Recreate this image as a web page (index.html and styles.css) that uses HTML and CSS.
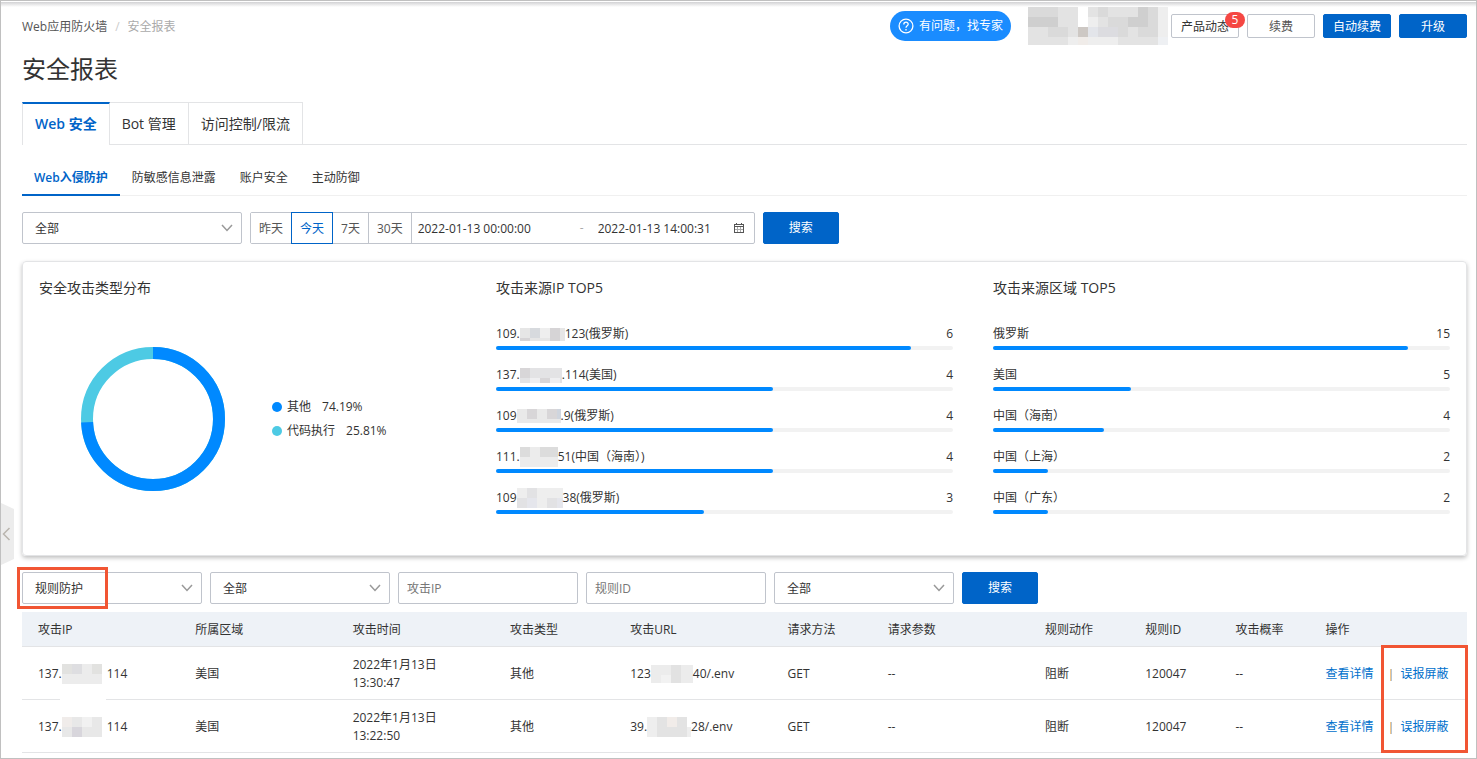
FILE: index.html
```html
<!DOCTYPE html>
<html lang="zh-CN">
<head>
<meta charset="utf-8">
<title>安全报表</title>
<link rel="stylesheet" href="styles.css">
</head>
<body>
<div class="page">
  <button class="collapse" type="button" aria-label="收起">
    <svg width="13" height="62" viewBox="0 0 13 62"><path d="M0 0L13 6V56L0 62Z" fill="#ececec"/><path d="M8.500 25L2.500 31L8.500 37" fill="none" stroke="#b9b5ae" stroke-width="1.500"/></svg>
  </button>

  <header class="topbar">
    <nav class="crumbs"><a href="#">Web应用防火墙</a><span class="slash">/</span><span class="here">安全报表</span></nav>
    <button class="expert" type="button">
      <svg width="16" height="16" viewBox="0 0 16 16" fill="none" stroke="#fff" stroke-width="1.300"><circle cx="8" cy="8" r="6.900"/><path d="M5.800 6.400C5.800 3.300 10.300 3.500 10.200 6.200C10.100 7.800 8 7.800 8 9.800"/><path d="M8 11V12.400"/></svg>
      有问题，找专家
    </button>
    <svg class="mask-account" width="140" height="38" viewBox="0 0 140 38" shape-rendering="crispEdges">
      <rect width="140" height="38" fill="#e3e3e3"/>
      <path d="M0 0H30V10H0ZM20 20H40V30H20ZM70 0H80V10H70ZM80 10H100V20H80ZM90 20H100V30H90ZM120 0H130V30H110V20H120Z" fill="#dadada"/>
      <path d="M0 10H30V20H0ZM110 0H120V20H100V10H110Z" fill="#cfcfcf"/>
      <path d="M50 0H60V20H50Z" fill="#fff"/>
      <path d="M50 20H60V30H50Z" fill="#cdc8c4"/>
      <path d="M60 20H70V30H60Z" fill="#e3e5ea"/>
      <path d="M70 20H90V30H70Z" fill="#dcdce0"/>
      <path d="M40 30H50V38H40ZM60 30H90V38H60ZM130 0H140V10H130ZM60 10H70V20H60ZM130 10H140V30H130Z" fill="#eee"/>
      <path d="M50 30H60V38H50Z" fill="#f0ece9"/>
      <path d="M130 30H140V38H130Z" fill="#eef0f3"/>
    </svg>
    <div class="actions">
      <button class="btn small news" type="button">产品动态<span class="badge">5</span></button>
      <button class="btn small muted" type="button">续费</button>
      <button class="btn small primary" type="button">自动续费</button>
      <button class="btn small primary" type="button">升级</button>
    </div>
  </header>

  <h1>安全报表</h1>

  <nav class="tabs">
    <a class="tab active" href="#">Web 安全</a>
    <a class="tab" href="#">Bot 管理</a>
    <a class="tab" href="#">访问控制/限流</a>
  </nav>

  <nav class="subtabs">
    <a class="subtab active" href="#">Web入侵防护</a>
    <a class="subtab" href="#">防敏感信息泄露</a>
    <a class="subtab" href="#">账户安全</a>
    <a class="subtab" href="#">主动防御</a>
  </nav>

  <form class="filters">
    <div class="select wide">
      <select aria-label="域名"><option>全部</option></select>
      <svg width="12" height="8" viewBox="0 0 12 8"><path d="M1 1L6 6.500L11 1"/></svg>
    </div>
    <div class="range">
      <button type="button">昨天</button>
      <button type="button" class="on">今天</button>
      <button type="button">7天</button>
      <button type="button">30天</button>
      <div class="dates">
        <input type="text" aria-label="开始时间" value="2022-01-13 00:00:00">
        <span>-</span>
        <input type="text" aria-label="结束时间" value="2022-01-13 14:00:31">
        <svg width="10" height="10" viewBox="0 0 10 10" fill="none" stroke="#555" shape-rendering="crispEdges"><path d="M.500 1.500H9.500V9.500H.500ZM0 3.500H10M2.500 0V2M7.500 0V2"/><path d="M3.500 4V9M6.500 4V9M1 6.500H9" stroke="#aaa"/></svg>
      </div>
    </div>
    <button class="btn primary" type="button">搜索</button>
  </form>

  <section class="card">
    <div class="panel">
      <h2>安全攻击类型分布</h2>
      <div class="chart">
        <svg width="144" height="144" viewBox="0 0 144 144" fill="none" stroke-width="12">
          <circle cx="72" cy="72" r="66" stroke="#4dcae4"/>
          <circle cx="72" cy="72" r="66" stroke="#0089ff" pathLength="100" stroke-dasharray="74.19 25.81" transform="rotate(-90 72 72)"/>
        </svg>
        <ul class="legend">
          <li><i class="dot blue"></i><span>其他</span><span class="pct">74.19%</span></li>
          <li><i class="dot cyan"></i><span>代码执行</span><span class="pct">25.81%</span></li>
        </ul>
      </div>
    </div>
    <div class="panel">
      <h2>攻击来源IP TOP5</h2>
      <ol class="ranks">
        <li><div class="line"><span>109.</span><svg width="45" height="13" shape-rendering="crispEdges"><rect width="45" height="13" fill="#e6e6e6"/><path d="M10 0H20V10H10Z" fill="#d7dade"/><path d="M30 0H40V13H30ZM0 10H10V13H0Z" fill="#d6d4d6"/><path d="M20 0H30V10H20Z" fill="#eee"/></svg><span>123(俄罗斯)</span><b>6</b></div><div class="track"><div class="fill" style="width:90.91%"></div></div></li>
        <li><div class="line"><span>137.</span><svg width="42" height="15" shape-rendering="crispEdges"><rect width="42" height="15" fill="#e3e3e5"/><path d="M0 0H10V10H0ZM20 10H30V15H20Z" fill="#d8d6d8"/><path d="M10 10H20V15H10ZM30 10H40V15H30Z" fill="#efeff1"/></svg><span>.114(美国)</span><b>4</b></div><div class="track"><div class="fill" style="width:60.61%"></div></div></li>
        <li><div class="line"><span>109</span><svg width="44" height="14" shape-rendering="crispEdges"><rect width="44" height="14" fill="#e9e9e9"/><path d="M10 0H20V10H10ZM30 0H40V10H30Z" fill="#d8d6d8"/><path d="M40 0H44V10H40Z" fill="#cfd5de"/></svg><span>.9(俄罗斯)</span><b>4</b></div><div class="track"><div class="fill" style="width:60.61%"></div></div></li>
        <li><div class="line"><span>111.</span><svg width="38" height="20" shape-rendering="crispEdges"><rect width="38" height="20" fill="#ececec"/><path d="M0 0H10V10H0ZM20 0H38V10H20Z" fill="#dcdcdc"/></svg><span>51(中国（海南）)</span><b>4</b></div><div class="track"><div class="fill" style="width:60.61%"></div></div></li>
        <li><div class="line"><span>109</span><svg width="46" height="20" shape-rendering="crispEdges"><rect width="46" height="20" fill="#eee"/><path d="M10 0H20V10H10ZM30 10H40V20H30ZM0 10H10V20H0Z" fill="#e2e2e4"/><path d="M10 10H20V20H10ZM40 10H46V20H40Z" fill="#e5e6ec"/></svg><span>38(俄罗斯)</span><b>3</b></div><div class="track"><div class="fill" style="width:45.45%"></div></div></li>
      </ol>
    </div>
    <div class="panel">
      <h2>攻击来源区域 TOP5</h2>
      <ol class="ranks">
        <li><div class="line"><span>俄罗斯</span><b>15</b></div><div class="track"><div class="fill" style="width:90.91%"></div></div></li>
        <li><div class="line"><span>美国</span><b>5</b></div><div class="track"><div class="fill" style="width:30.3%"></div></div></li>
        <li><div class="line"><span>中国（海南）</span><b>4</b></div><div class="track"><div class="fill" style="width:24.24%"></div></div></li>
        <li><div class="line"><span>中国（上海）</span><b>2</b></div><div class="track"><div class="fill" style="width:12.12%"></div></div></li>
        <li><div class="line"><span>中国（广东）</span><b>2</b></div><div class="track"><div class="fill" style="width:12.12%"></div></div></li>
      </ol>
    </div>
  </section>

  <form class="filters second">
    <div class="select">
      <select aria-label="防护类型"><option>规则防护</option></select>
      <svg width="12" height="8" viewBox="0 0 12 8"><path d="M1 1L6 6.500L11 1"/></svg>
    </div>
    <div class="select">
      <select aria-label="攻击类型"><option>全部</option></select>
      <svg width="12" height="8" viewBox="0 0 12 8"><path d="M1 1L6 6.500L11 1"/></svg>
    </div>
    <input class="text" type="text" aria-label="攻击IP" placeholder="攻击IP">
    <input class="text" type="text" aria-label="规则ID" placeholder="规则ID">
    <div class="select">
      <select aria-label="规则动作"><option>全部</option></select>
      <svg width="12" height="8" viewBox="0 0 12 8"><path d="M1 1L6 6.500L11 1"/></svg>
    </div>
    <button class="btn primary" type="button">搜索</button>
    <div class="mark mark-rule"></div>
  </form>

  <div class="records">
    <table>
      <colgroup><col class="wide-col"><col class="wide-col"><col class="wide-col"><col class="type-col"><col class="wide-col"><col class="mid-col"><col class="wide-col"><col class="mid-col"><col class="slim-col"><col class="slim-col"><col class="wide-col"></colgroup>
      <thead>
        <tr><th>攻击IP</th><th>所属区域</th><th>攻击时间</th><th>攻击类型</th><th>攻击URL</th><th>请求方法</th><th>请求参数</th><th>规则动作</th><th>规则ID</th><th>攻击概率</th><th>操作</th></tr>
      </thead>
      <tbody>
        <tr>
          <td class="gap"><div class="masked"><span>137.</span><svg width="40" height="20" shape-rendering="crispEdges"><rect width="40" height="20" fill="#ececec"/><path d="M0 0H10V10H0ZM30 0H40V10H30Z" fill="#e2e2e0"/><path d="M10 0H20V10H10Z" fill="#dedee1"/></svg><span class="tail">114</span></div></td>
          <td>美国</td><td>2022年1月13日<br>13:30:47</td><td>其他</td>
          <td><div class="masked"><span>123</span><svg width="42" height="18" shape-rendering="crispEdges"><rect width="42" height="18" fill="#ececec"/><path d="M20 0H30V18H20Z" fill="#e2e2e2"/><path d="M10 10H20V18H10Z" fill="#f2f2f2"/></svg><span>40/.env</span></div></td>
          <td>GET</td><td>--</td><td>阻断</td><td>120047</td><td>--</td>
          <td class="ops"><a href="#">查看详情</a><i></i><a href="#">误报屏蔽</a></td>
        </tr>
        <tr>
          <td><div class="masked"><span>137.</span><svg width="40" height="20" shape-rendering="crispEdges"><rect width="40" height="20" fill="#e8e8e8"/><path d="M0 0H10V10H0Z" fill="#f0ecea"/><path d="M10 10H20V20H10Z" fill="#d8d6dc"/><path d="M20 0H30V10H20Z" fill="#f1f1f1"/></svg><span class="tail">114</span></div></td>
          <td>美国</td><td>2022年1月13日<br>13:22:50</td><td>其他</td>
          <td><div class="masked"><span>39.</span><svg width="44" height="20" shape-rendering="crispEdges"><rect width="40" height="20" fill="#e3e3e3"/><path d="M0 0H10V20H0ZM40 10H44V20H40Z" fill="#eee"/><path d="M20 0H30V10H20Z" fill="#f1ece9"/></svg><span>28/.env</span></div></td>
          <td>GET</td><td>--</td><td>阻断</td><td>120047</td><td>--</td>
          <td class="ops"><a href="#">查看详情</a><i></i><a href="#">误报屏蔽</a></td>
        </tr>
      </tbody>
    </table>
    <div class="mark mark-ops"></div>
  </div>
</div>
</body>
</html>
```

FILE: styles.css
```css
* { box-sizing: border-box; }

body, h1, h2, ul, ol { margin: 0; padding: 0; }

body, button, input, select {
  font-family: "Open Sans", "Noto Sans CJK SC", sans-serif;
  font-size: 12px;
  line-height: 18px;
  color: #333;
}

body { background: #fff; }
ul, ol { list-style: none; }
a { color: inherit; text-decoration: none; }
svg { display: block; flex: none; }

.page {
  position: relative;
  min-height: 100vh;
  padding: 6px 9px 5px 21px;
  border: 1px solid #c0c0c0;
  background: linear-gradient(#fff 0 1px, #d2d2d4 1px, #fff 6px) top / 100% 6px no-repeat;
}

.collapse {
  position: absolute;
  left: 0;
  top: 502px;
  padding: 0;
  border: 0;
  background: none;
}

/* Top bar */
.topbar { display: flex; align-items: center; }
.crumbs { display: flex; gap: 8px; flex: 1; padding-top: 2px; color: #555; }
.slash { color: #ccc; }
.here { color: #aaa; }

.expert {
  display: flex;
  align-items: center;
  gap: 5px;
  height: 30px;
  padding: 0 8px;
  margin-right: 17px;
  border: 0;
  border-radius: 15px;
  background: #1a8cff;
  color: #fff;
  white-space: nowrap;
}

.mask-account { margin-right: 3px; }
.actions { display: flex; gap: 8px; }

.btn {
  width: 76px;
  height: 32px;
  padding: 0;
  border: 1px solid #c0c4cc;
  border-radius: 2px;
  background: #fff;
}
.btn.small { width: 68px; height: 24px; padding-top: 1px; line-height: 20px; }
.btn.muted { color: #555; }
.btn.primary { border-color: #0064c8; background: #0064c8; color: #fff; }
.news { position: relative; }
.badge {
  position: absolute;
  right: -7px;
  top: -3px;
  width: 20px;
  height: 16px;
  border-radius: 8px;
  background: #f54743;
  color: #fff;
  line-height: 16px;
}

h1 {
  margin: 8px 0 17px;
  font-size: 24px;
  line-height: 32px;
  font-weight: 400;
}

/* Tabs */
.tabs { display: flex; border-bottom: 1px solid #e3e4e6; font-size: 14px; }
.tab {
  padding: 11px 12px 10px;
  border: 1px solid #e3e4e6;
  border-width: 1px 1px 0 0;
  line-height: 20px;
}
.tab.active {
  margin-bottom: -1px;
  padding-top: 10px;
  border-left-width: 1px;
  border-top: 2px solid #0064c8;
  background: #fff;
  color: #0064c8;
  font-weight: 600;
}

.subtabs { display: flex; margin-top: 16px; box-shadow: inset 0 -1px #f0f0f0; }
.subtab { padding: 8px 12px 7px; border-bottom: 2px solid transparent; }
.subtab.active { border-color: #0064c8; color: #0064c8; font-weight: 600; }

/* Filters */
.filters { position: relative; display: flex; gap: 8px; margin-top: 16px; }

.select { display: grid; width: 180px; align-items: center; }
.select.wide { width: 220px; }
.select > * { grid-area: 1 / 1; }
.select svg { justify-self: end; margin-right: 9px; pointer-events: none; fill: none; stroke: #999; stroke-width: 1.5; }
.select select, .text {
  width: 100%;
  height: 32px;
  padding: 1px 12px 0;
  border: 1px solid #c0c4cc;
  border-radius: 2px;
  background: #fff;
  appearance: none;
}
.text { width: 180px; padding: 0 8px; }
.text::placeholder { color: #777; opacity: 1; }

.range { display: flex; height: 32px; border: 1px solid #c0c4cc; border-radius: 2px; }
.range button {
  padding: 1px 8px 0;
  border: 0;
  border-right: 1px solid #c0c4cc;
  background: #fff;
  color: #555;
}
.range .on { margin: -1px; border: 1px solid #0064c8; color: #0064c8; z-index: 1; }
.range .on + button { padding-left: 9px; }
.dates { display: flex; align-items: center; padding: 0 10px 0 6px; color: #aaa; }
.dates input { width: 136px; padding: 1px 0 0; border: 0; background: none; outline: 0; }
.dates input:first-child { width: 162px; }
.dates span { width: 18px; }

/* Overview card */
.card {
  display: grid;
  grid-template-columns: 417fr 457fr 457fr;
  gap: 40px;
  margin-top: 17px;
  padding: 16px 16px 41px;
  border: 1px solid #e3e4e6;
  border-radius: 4px;
  box-shadow: 0 2px 4px rgba(0, 0, 0, .25);
}
h2 { font-size: 14px; line-height: 20px; font-weight: 400; }

.chart { display: flex; align-items: center; gap: 47px; margin: 49px 0 0 42px; }
.legend { display: grid; gap: 6px; }
.legend li { display: flex; align-items: center; }
.dot { width: 10px; height: 10px; margin-right: 5px; border-radius: 50%; }
.blue { background: #0089ff; }
.cyan { background: #4dcae4; }
.pct { margin-left: 11px; }

.ranks { display: grid; gap: 16px; margin-top: 27px; }
.line { display: flex; align-items: center; height: 18px; margin-bottom: 3px; white-space: nowrap; }
.line b { margin-left: auto; font-weight: 400; }
.track { height: 4px; border-radius: 2px; background: #f2f2f2; }
.fill { height: 4px; border-radius: 2px; background: #0089ff; }

/* Records */
.records { position: relative; margin-top: 8px; }
table { width: 100%; table-layout: fixed; border-collapse: separate; border-spacing: 0; }
.wide-col { width: 157px; }
.type-col { width: 120px; }
.mid-col { width: 100px; }
.slim-col { width: 90px; }
th, td {
  padding: 9px 0 7px 16px;
  border-bottom: 1px solid #e3e4e6;
  text-align: left;
  font-weight: 400;
}
th { background: #eef2f7; }
.masked { display: flex; align-items: center; height: 20px; }
.tail { margin-left: 5px; }
.gap { position: relative; }
.gap::after { content: ""; position: absolute; left: 38px; bottom: -1px; width: 46px; height: 1px; background: #fff; }
.ops { color: #0070cc; white-space: nowrap; }
.ops i {
  display: inline-block;
  height: 12px;
  margin: 0 9px 0 16px;
  border-left: 1px solid #f0c68c;
  border-right: 1px solid #b4c4d4;
  vertical-align: middle;
}

/* Highlight frames */
.mark { position: absolute; border: 3px solid #f15533; pointer-events: none; }
.mark-rule { left: -5px; top: -5px; width: 91px; height: 42px; }
.mark-ops { right: -1px; top: 33px; bottom: 0; width: 87px; }
```
